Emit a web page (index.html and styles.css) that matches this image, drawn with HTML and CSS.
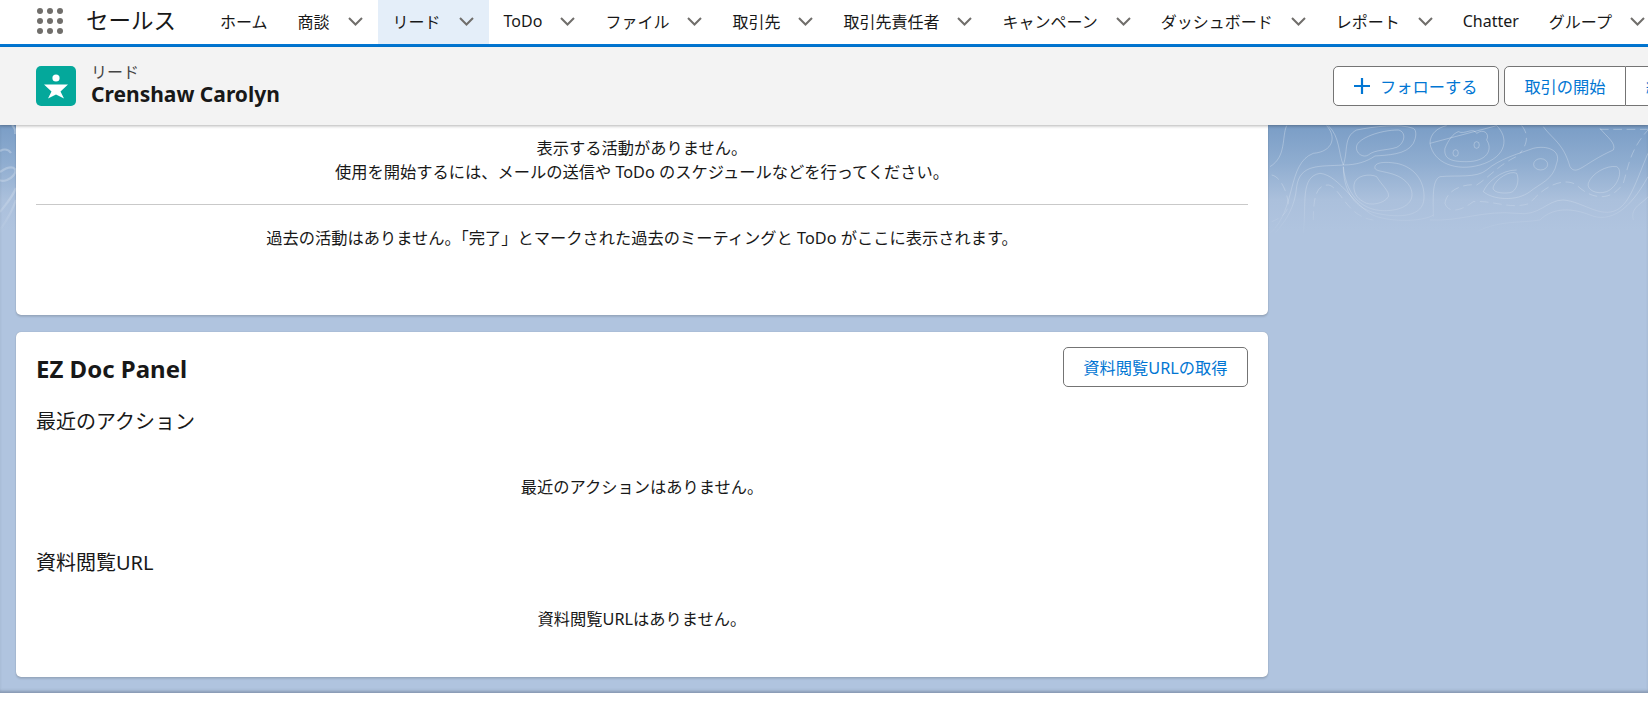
FILE: index.html
```html
<!DOCTYPE html>
<html lang="ja">
<head>
<meta charset="utf-8">
<title>Crenshaw Carolyn | リード</title>
<link rel="stylesheet" href="styles.css">
</head>
<body>
<div class="page">
  <nav class="nav">
    <div class="waffle"><i></i><i></i><i></i><i></i><i></i><i></i><i></i><i></i><i></i></div>
    <span class="app-name">セールス</span>
    <ul class="tabs">
      <li class="tab"><span>ホーム</span></li>
      <li class="tab"><span>商談</span><svg class="chev" viewBox="0 0 15 9"><path d="M1 1l6.5 6.5L14 1"/></svg></li>
      <li class="tab active"><span>リード</span><svg class="chev" viewBox="0 0 15 9"><path d="M1 1l6.5 6.5L14 1"/></svg></li>
      <li class="tab"><span>ToDo</span><svg class="chev" viewBox="0 0 15 9"><path d="M1 1l6.5 6.5L14 1"/></svg></li>
      <li class="tab"><span>ファイル</span><svg class="chev" viewBox="0 0 15 9"><path d="M1 1l6.5 6.5L14 1"/></svg></li>
      <li class="tab"><span>取引先</span><svg class="chev" viewBox="0 0 15 9"><path d="M1 1l6.5 6.5L14 1"/></svg></li>
      <li class="tab"><span>取引先責任者</span><svg class="chev" viewBox="0 0 15 9"><path d="M1 1l6.5 6.5L14 1"/></svg></li>
      <li class="tab"><span>キャンペーン</span><svg class="chev" viewBox="0 0 15 9"><path d="M1 1l6.5 6.5L14 1"/></svg></li>
      <li class="tab"><span>ダッシュボード</span><svg class="chev" viewBox="0 0 15 9"><path d="M1 1l6.5 6.5L14 1"/></svg></li>
      <li class="tab"><span>レポート</span><svg class="chev" viewBox="0 0 15 9"><path d="M1 1l6.5 6.5L14 1"/></svg></li>
      <li class="tab"><span>Chatter</span></li>
      <li class="tab"><span>グループ</span><svg class="chev" viewBox="0 0 15 9"><path d="M1 1l6.5 6.5L14 1"/></svg></li>
    </ul>
  </nav>
  <header class="record">
    <div class="record-id">
      <svg class="lead-icon" viewBox="0 0 40 40"><rect width="40" height="40" rx="5" fill="#04a89b"/><circle cx="20" cy="12" r="3.6" fill="#fff"/><path d="M8 18.500h24l-7.500 7 3.500 7-8-4-8 4 3.500-7z" fill="#fff"/></svg>
      <div class="record-text">
        <div class="record-type">リード</div>
        <div class="record-name">Crenshaw Carolyn</div>
      </div>
    </div>
    <div class="actions">
      <button class="btn follow"><svg class="plus" viewBox="0 0 16 16"><path d="M8 0v16M0 8h16"/></svg>フォローする</button>
      <div class="btn-group">
        <button class="btn grouped">取引の開始</button>
        <button class="btn grouped">編集</button>
      </div>
    </div>
  </header>
  <main class="content">
    <svg class="topo" viewBox="0 0 1648 130" aria-hidden="true">
      <defs>
        <linearGradient id="fade" gradientUnits="userSpaceOnUse" x1="0" y1="0" x2="0" y2="118">
          <stop offset="0" stop-color="#fff" stop-opacity=".3"/>
          <stop offset=".65" stop-color="#fff" stop-opacity=".2"/>
          <stop offset="1" stop-color="#fff" stop-opacity="0"/>
        </linearGradient>
        <linearGradient id="fade2" gradientUnits="userSpaceOnUse" x1="0" y1="0" x2="0" y2="350">
          <stop offset="0" stop-color="#fff" stop-opacity=".3"/>
          <stop offset=".65" stop-color="#fff" stop-opacity=".2"/>
          <stop offset="1" stop-color="#fff" stop-opacity="0"/>
        </linearGradient>
      </defs>
      <g class="topo-lines" stroke="url(#fade)">
        <path d="M0 31c5-3 9-1 11 2M0 52c6-4 12-6 15-3 2 4-3 9-8 11-3 1-6 1-7 0M0 92c6-8 12-14 16-24M0 110c7-10 12-18 16-30M12 5c3 3 4 6 3 9"/>
        <g transform="translate(1200 0) scale(.3333)" stroke="url(#fade2)">
          <path d="M470 78C475 55 540 30 595 30 620 35 615 70 590 82 560 92 525 88 505 105 490 115 465 100 470 78Z"/>
          <path d="M430 135C445 90 430 50 470 30 520 20 600 10 640 25M430 135C470 135 500 125 525 108 560 105 620 105 640 70 650 50 650 30 640 25"/>
          <path d="M690 70C690 40 715 22 740 17M890 17C925 50 925 110 840 135 770 155 700 130 690 70Z"/>
          <path d="M735 85C745 60 760 40 775 35 795 45 820 20 830 40 850 25 870 40 860 60 880 90 860 125 800 125 760 125 730 120 735 85Z"/>
          <ellipse cx="767" cy="99" rx="8" ry="10"/><ellipse cx="830" cy="75" rx="8" ry="10"/>
          <path d="M430 140C430 195 450 262 530 280 600 295 670 290 672 235 675 180 640 140 590 130 560 125 520 125 525 145 530 160 600 150 630 200 650 240 620 270 560 272 500 275 440 240 430 140Z"/>
          <path d="M462 195C465 165 510 160 530 170 545 195 570 215 565 230 555 250 510 260 490 245 470 235 460 215 462 195Z"/>
          <path d="M880 200C890 175 930 150 950 160 960 180 950 215 930 218 900 222 875 215 880 200Z"/>
          <ellipse cx="1022" cy="133" rx="21" ry="17"/>
          <path d="M1165 190C1175 160 1220 135 1250 140 1270 150 1255 200 1220 215 1190 225 1160 210 1165 190Z"/>
          <path d="M210 340C290 270 260 130 340 100 400 95 410 50 380 17"/>
          <path d="M210 140C260 110 245 50 260 17M385 17C420 50 415 100 430 135 360 140 300 130 290 200 285 260 260 300 225 340"/>
          <path d="M310 340C320 250 300 170 360 160 420 165 470 270 530 290 600 310 680 300 700 285"/>
          <path d="M700 290C700 240 695 180 720 170 770 165 830 175 860 150 900 115 960 100 1000 85 1040 75 1085 90 1070 130 1060 180 1020 190 990 215 950 245 880 240 850 215 860 190 900 150 950 150"/>
          <path d="M690 300C780 305 850 270 950 280 1020 290 1040 240 1090 240 1150 245 1200 295 1250 270 1290 250 1310 180 1344 100"/>
          <path d="M830 335C900 300 960 310 1020 300 1060 260 1120 265 1170 285 1230 310 1290 270 1344 170"/>
          <path d="M1030 20C1060 60 1090 70 1110 140 1130 170 1150 130 1240 90 1250 70 1220 50 1200 25"/>
          <path d="M1300 300C1290 260 1330 250 1344 230"/>
          <path class="dash" d="M735 250C740 210 790 190 830 195 870 170 900 130 960 105M735 250C745 280 780 275 820 245 880 240 930 270 990 250 1030 200 1090 170 1130 195 1170 235 1230 250 1270 190 1285 140 1290 90 1344 30"/>
          <path class="dash" d="M340 300C340 230 350 195 385 195 420 200 440 290 520 300 M215 165C240 170 260 210 265 250 265 280 240 295 215 305M965 17C985 40 985 70 960 100M1200 28H1344"/>
        </g>
      </g>
    </svg>
    <div class="column">
      <section class="card activity">
        <p class="line">表示する活動がありません。</p>
        <p class="line">使用を開始するには、メールの送信や ToDo のスケジュールなどを行ってください。</p>
        <hr class="rule">
        <p class="line">過去の活動はありません。「完了」とマークされた過去のミーティングと ToDo がここに表示されます。</p>
      </section>
      <section class="card panel">
        <div class="panel-head">
          <h2 class="panel-title">EZ Doc Panel</h2>
          <button class="btn url-btn">資料閲覧URLの取得</button>
        </div>
        <h3 class="sub first">最近のアクション</h3>
        <p class="line empty-a">最近のアクションはありません。</p>
        <h3 class="sub second">資料閲覧URL</h3>
        <p class="line empty-b">資料閲覧URLはありません。</p>
      </section>
    </div>
  </main>
</div>
</body>
</html>
```
FILE: styles.css
```css
* { box-sizing: border-box; }
html, body { margin: 0; padding: 0; background: #fff; }
body {
  width: 1648px;
  height: 703px;
  overflow: hidden;
  font-family: "Noto Sans", "Noto Sans CJK JP", sans-serif;
  font-size: 16.25px;
  color: #181818;
}
.page { display: flex; flex-direction: column; height: 693px; }

.nav {
  flex: 0 0 47px;
  display: flex;
  align-items: stretch;
  background: #fff;
  border-bottom: 3px solid #0176d3;
  white-space: nowrap;
  overflow: hidden;
  padding-left: 37px;
}
.waffle {
  flex: 0 0 26px;
  height: 26px;
  margin-top: 8px;
  display: grid;
  grid-template-columns: repeat(3, 6px);
  grid-auto-rows: 6px;
  gap: 4px;
}
.waffle i { background: #706e6b; border-radius: 50%; }
.app-name {
  flex: 0 0 119px;
  margin-left: 23px;
  font-size: 22.5px;
  line-height: 41px;
}
.tabs { flex: none; list-style: none; display: flex; margin: 0; padding: 0; }
.tab {
  display: flex;
  align-items: center;
  gap: 18px;
  padding: 0 15px 2px;
  font-size: 16px;
}
.tab.active { background: #e4eef9; }
.chev { width: 15px; height: 9px; flex: none; }
.chev path { fill: none; stroke: #706e6b; stroke-width: 2; }

.record {
  flex: 0 0 78px;
  position: relative;
  z-index: 2;
  display: flex;
  align-items: center;
  padding-left: 36px;
  background: #f3f3f3;
  box-shadow: 0 1px 3px rgba(0, 0, 0, .3);
  overflow: hidden;
}
.record-id { flex: 0 0 1297px; display: flex; align-items: center; gap: 15px; }
.lead-icon { width: 40px; height: 40px; flex: none; }
.record-text { padding-bottom: 2px; }
.record-type { font-size: 16px; line-height: 18px; color: #444; }
.record-name { font-size: 21px; line-height: 26px; font-weight: 700; }

.actions { display: flex; gap: 5px; flex: none; }
.btn {
  height: 40px;
  padding: 0 20px;
  font: inherit;
  font-size: 16.25px;
  color: #0176d3;
  background: #fff;
  border: 1px solid #747474;
  border-radius: 5px;
  white-space: nowrap;
}
.follow { display: flex; align-items: center; width: 166px; padding-left: 20px; gap: 10px; }
.plus { width: 16px; height: 16px; flex: none; }
.plus path { stroke: #0176d3; stroke-width: 2.2; fill: none; }
.btn-group { display: flex; }
.grouped { border-radius: 5px 0 0 5px; width: 122px; padding: 0; }
.grouped + .grouped { border-left: 0; border-radius: 0 5px 5px 0; width: 64px; padding: 0 20px; }

.content {
  position: relative;
  flex: 1;
  overflow: hidden;
  padding-left: 16px;
  background: linear-gradient(#7a9dc6 0, #8fadd0 38px, #abc0dc 75px, #b0c4df 105px);
  box-shadow: inset 0 -3px 3px -1px rgba(40, 50, 70, .3);
}
.topo { position: absolute; left: 0; top: -5px; width: 1648px; height: 130px; }
.topo-lines path, .topo-lines ellipse { fill: none; stroke-width: 2.2; }
.topo-lines g path, .topo-lines g ellipse { stroke-width: 3; }
.topo-lines .dash { stroke-dasharray: 26 14; }

.column { position: relative; width: 1252px; display: flex; flex-direction: column; gap: 17px; }
.card {
  background: #fff;
  border-radius: 5px;
  box-shadow: 0 2px 2px rgba(0, 0, 0, .12), 0 0 1px rgba(0, 0, 0, .3);
}
.activity { height: 190px; padding: 11px 20px 0; border-radius: 0 0 5px 5px; }
.line { margin: 0; text-align: center; line-height: 24px; }
.rule { margin: 20px 0 21px; border: 0; border-top: 1px solid #c9c9c9; }
.panel { height: 345px; padding: 15px 20px 0; }
.panel-head { display: flex; justify-content: space-between; align-items: flex-start; }
.panel-title { margin: 2px 0 0; font-size: 24px; line-height: 40px; font-weight: 700; }
.url-btn { width: 185px; padding: 0; }
.sub { margin: 0; font-size: 20px; font-weight: 400; line-height: 28px; }
.first { margin-top: 19px; }
.empty-a { margin-top: 39px; }
.second { margin-top: 50px; }
.empty-b { margin-top: 30px; }
```
